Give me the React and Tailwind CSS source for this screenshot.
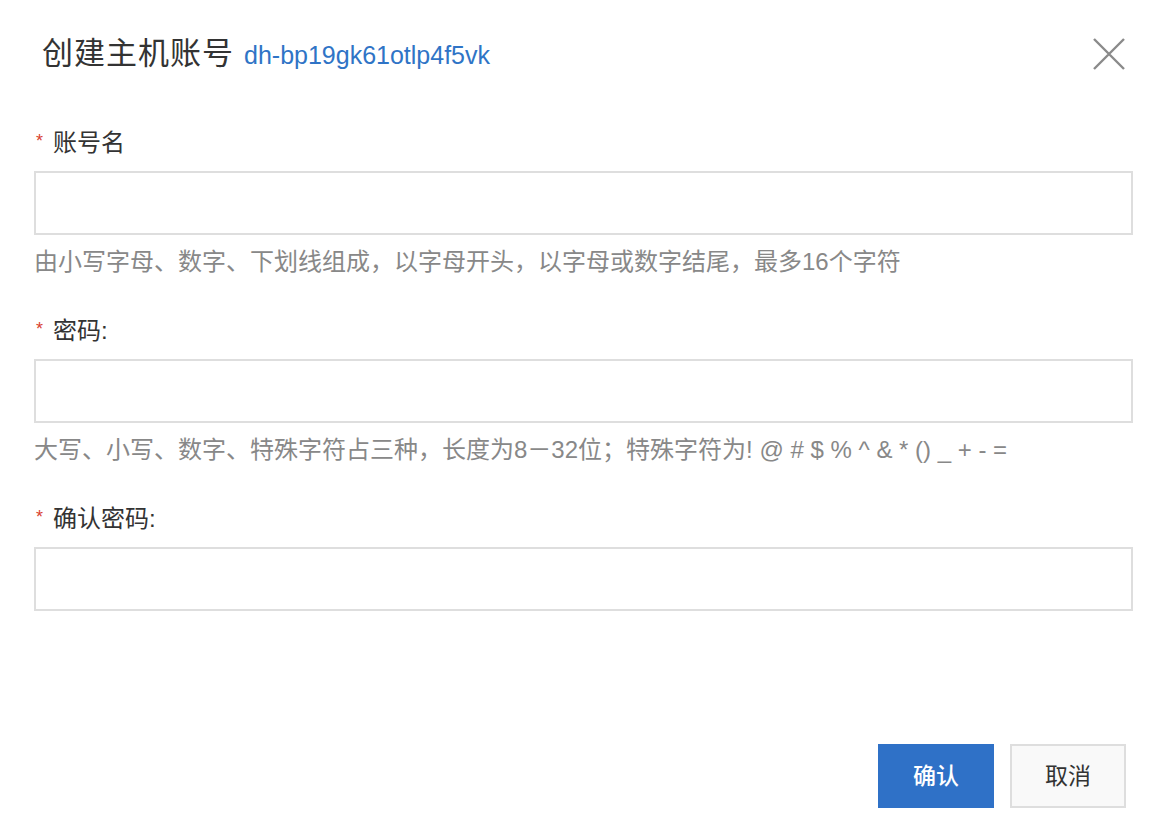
import React, { useState } from "react";

const font = { fontFamily: '"Liberation Sans", "Noto Sans CJK SC", sans-serif' };

const Field = ({ label, name, type, value, onChange, help }) => (
  <div className="flex flex-col">
    <label className="flex items-center text-[24px] leading-[30px] text-[#333]">
      <span className="text-[#d9412f] text-[18px] ml-[2px] mr-[10px] -mt-[4px]">*</span>
      {label}
    </label>
    <input
      type={type}
      name={name}
      value={value}
      onChange={onChange}
      className="mt-[13px] h-[64px] w-full border-2 border-[#dedede] bg-white px-3 text-[22px] outline-none"
    />
    {help && <p className="mt-[12px] text-[24px] leading-[30px] text-[#888]">{help}</p>}
  </div>
);

const App = () => {
  const [formData, setFormData] = useState({ name: "", password: "", confirm: "" });

  const handleChange = (e) => {
    setFormData({ ...formData, [e.target.name]: e.target.value });
  };

  return (
    <div className="w-[1170px] h-[830px] bg-white flex flex-col" style={font}>
      <div className="flex items-center justify-between pl-[42px] pr-[44px] pt-[35px]">
        <div className="flex items-baseline">
          <h2 className="text-[31px] leading-[38px] tracking-[1px] text-[#333]">创建主机账号</h2>
          <span className="ml-[10px] text-[25px] text-[#2f74c6]">dh-bp19gk61otlp4f5vk</span>
        </div>
        <button className="w-[34px] h-[34px] flex items-center justify-center -mt-[2px]">
          <svg width="34" height="34" viewBox="0 0 34 34" fill="none">
            <path d="M2 2 L32 32 M32 2 L2 32" stroke="#8a8a8a" strokeWidth="2.4" />
          </svg>
        </button>
      </div>

      <form className="flex flex-col pl-[34px] pr-[37px] mt-[53px] gap-[39px]">
        <Field
          label="账号名"
          name="name"
          type="text"
          value={formData.name}
          onChange={handleChange}
          help="由小写字母、数字、下划线组成，以字母开头，以字母或数字结尾，最多16个字符"
        />
        <Field
          label="密码:"
          name="password"
          type="password"
          value={formData.password}
          onChange={handleChange}
          help="大写、小写、数字、特殊字符占三种，长度为8－32位；特殊字符为! @ # $ % ^ & * () _ + - ="
        />
        <Field
          label="确认密码:"
          name="confirm"
          type="password"
          value={formData.confirm}
          onChange={handleChange}
        />
      </form>

      <div className="flex justify-end gap-[16px] pr-[44px] mt-auto mb-[22px]">
        <button className="w-[116px] h-[64px] bg-[#2f71c7] text-white text-[23px] font-medium">确认</button>
        <button className="w-[116px] h-[64px] bg-[#f9f9f9] border-2 border-[#dedede] text-[#333] text-[23px]">
          取消
        </button>
      </div>
    </div>
  );
};

export default App;
